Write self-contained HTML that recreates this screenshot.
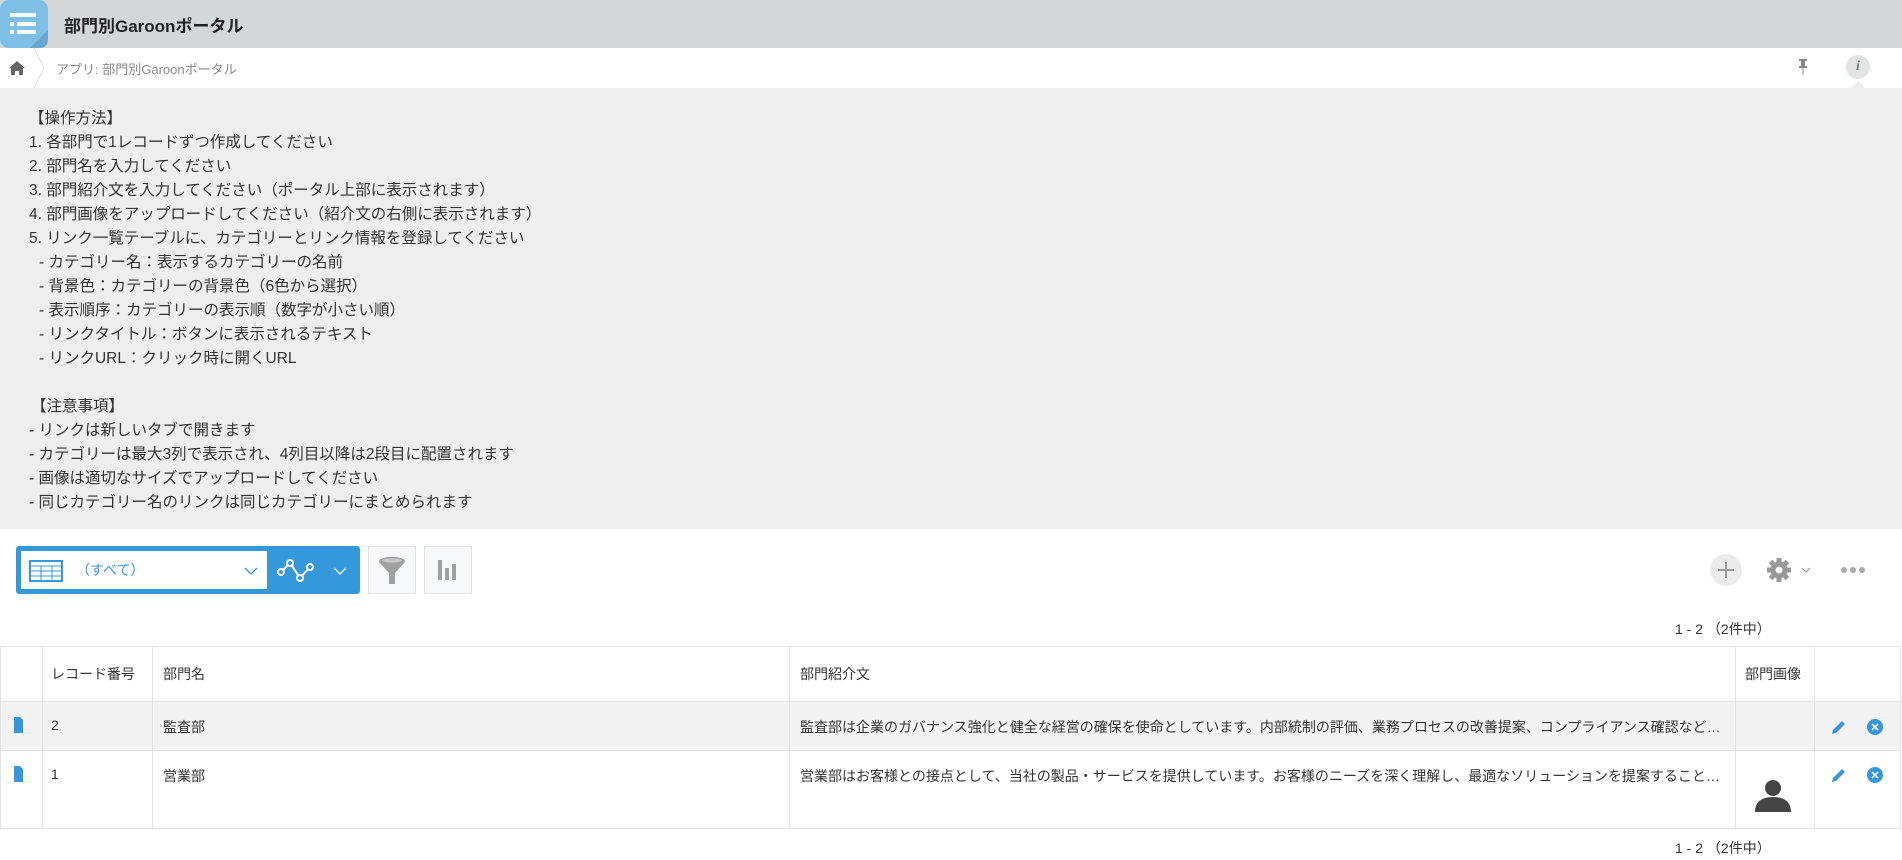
<!DOCTYPE html>
<html><head><meta charset="utf-8"><style>
*{margin:0;padding:0;box-sizing:border-box}
body{width:1902px;height:860px;overflow:hidden;background:#fff;font-family:"Liberation Sans","Noto Sans CJK JP",sans-serif;color:#333;position:relative}
.abs{position:absolute}
.hdr{left:0;top:0;width:1902px;height:48px;background:#d4d7d8}
.title{left:64px;top:12px;font-size:17px;font-weight:bold;color:#222}
.crumb{left:0;top:48px;width:1902px;height:40px;background:#fff}
.desc{left:0;top:88px;width:1902px;height:441px;background:#eee}
.ln{position:absolute;font-size:15.5px;color:#333;white-space:nowrap;line-height:24px;margin-top:2px;margin-left:-1px}
table{position:absolute;left:0;top:646px;border-collapse:collapse;font-size:14px;table-layout:fixed}
td{border:1px solid #e3e3e3;padding:0 10px;vertical-align:top;white-space:nowrap;overflow:hidden}
.cnt{font-size:14px;color:#333}
</style></head><body>
<div class="abs hdr"></div>
<svg class="abs" style="left:0;top:0" width="48" height="48"><rect width="48" height="48" rx="9" fill="#7ebfe6"/><path d="M30 48 L48 30 L48 39 Q48 48 39 48Z" fill="#6aa7d0"/><rect x="10" y="13" width="26" height="4" fill="#fff"/><rect x="10" y="22" width="4" height="4" fill="#fff"/><rect x="17" y="22" width="19" height="4" fill="#fff"/><rect x="10" y="30" width="4" height="4" fill="#fff"/><rect x="17" y="30" width="19" height="4" fill="#fff"/></svg>
<div class="abs title">部門別Garoonポータル</div>
<div class="abs crumb"></div>
<svg class="abs" style="left:8px;top:60px" width="18" height="16"><path d="M9 1 L1 8 H3 V15 H7 V11 H11 V15 H15 V8 H17Z" fill="#666"/></svg>
<svg class="abs" style="left:32px;top:48px" width="14" height="40"><path d="M2 0 L12 20 L2 40" fill="none" stroke="#ddd"/></svg>
<div class="abs" style="left:56px;top:59px;font-size:13px;color:#888">アプリ: 部門別Garoonポータル</div>
<svg class="abs" style="left:1796px;top:57px" width="14" height="20"><path d="M3 2 H11 V4 H9 V9 H11 V11 H3 V9 H5 V4 H3Z M6.5 11 V18 H7.5 V11" fill="#888"/></svg>
<div class="abs" style="left:1846px;top:55px;width:24px;height:24px;border-radius:12px;background:#e3e4e5;text-align:center;font:italic bold 14px 'Liberation Serif',serif;line-height:24px;color:#777">i</div>
<div class="abs desc"></div>
<svg class="abs" style="left:1850px;top:81px" width="16" height="8"><path d="M0 8 L8 0 L16 8Z" fill="#eee"/></svg>
<div class="ln" style="left:30px;top:105px">【操作方法】</div>
<div class="ln" style="left:30px;top:129px">1. 各部門で1レコードずつ作成してください</div>
<div class="ln" style="left:30px;top:153px">2. 部門名を入力してください</div>
<div class="ln" style="left:30px;top:177px">3. 部門紹介文を入力してください（ポータル上部に表示されます）</div>
<div class="ln" style="left:30px;top:201px">4. 部門画像をアップロードしてください（紹介文の右側に表示されます）</div>
<div class="ln" style="left:30px;top:225px">5. リンク一覧テーブルに、カテゴリーとリンク情報を登録してください</div>
<div class="ln" style="left:40px;top:249px">- カテゴリー名：表示するカテゴリーの名前</div>
<div class="ln" style="left:40px;top:273px">- 背景色：カテゴリーの背景色（6色から選択）</div>
<div class="ln" style="left:40px;top:297px">- 表示順序：カテゴリーの表示順（数字が小さい順）</div>
<div class="ln" style="left:40px;top:321px">- リンクタイトル：ボタンに表示されるテキスト</div>
<div class="ln" style="left:40px;top:345px">- リンクURL：クリック時に開くURL</div>
<div class="ln" style="left:32px;top:393px">【注意事項】</div>
<div class="ln" style="left:30px;top:417px">- リンクは新しいタブで開きます</div>
<div class="ln" style="left:30px;top:441px">- カテゴリーは最大3列で表示され、4列目以降は2段目に配置されます</div>
<div class="ln" style="left:30px;top:465px">- 画像は適切なサイズでアップロードしてください</div>
<div class="ln" style="left:30px;top:489px">- 同じカテゴリー名のリンクは同じカテゴリーにまとめられます</div>

<div class="abs" style="left:16px;top:546px;width:344px;height:48px;background:#3498db;border-radius:3px"></div>
<div class="abs" style="left:21px;top:551px;width:246px;height:38px;background:#fff"></div>
<svg class="abs" style="left:29px;top:560px" width="34" height="22"><rect x="1" y="1" width="32" height="20" fill="#fff" stroke="#3498db" stroke-width="2"/><path d="M1 6H33M1 11H33M1 16H33M12 6V21M23 6V21" stroke="#3498db" stroke-width="1"/></svg>
<div class="abs" style="left:76px;top:560px;font-size:14px;color:#3498db">（すべて）</div>
<svg class="abs" style="left:244px;top:566px" width="14" height="10"><path d="M1 2 L7 8 L13 2" fill="none" stroke="#3498db" stroke-width="1.3"/></svg>
<svg class="abs" style="left:276px;top:558px" width="42" height="26"><path d="M5 14 L14 5 L24 20 L34 9" fill="none" stroke="#fff" stroke-width="2"/><g fill="#3498db" stroke="#fff" stroke-width="2"><circle cx="5" cy="14" r="3"/><circle cx="14" cy="5" r="3"/><circle cx="24" cy="20" r="3"/><circle cx="34" cy="9" r="3"/></g></svg>
<svg class="abs" style="left:333px;top:566px" width="14" height="10"><path d="M1 2 L7 8 L13 2" fill="none" stroke="#fff" stroke-width="1.3"/></svg>
<div class="abs" style="left:368px;top:546px;width:48px;height:48px;background:#f7f8f9;border:1px solid #e3e3e3"></div>
<svg class="abs" style="left:377px;top:555px" width="30" height="30"><ellipse cx="15" cy="6" rx="13" ry="4" fill="#a0a0a0"/><path d="M2 7 L12 18 V29 H18 V18 L28 7Z" fill="#a0a0a0"/><ellipse cx="15" cy="5.5" rx="10" ry="2" fill="#c8c8c8"/></svg>
<div class="abs" style="left:424px;top:546px;width:48px;height:48px;background:#f7f8f9;border:1px solid #e3e3e3"></div>
<svg class="abs" style="left:436px;top:558px" width="24" height="24"><rect x="2" y="2" width="4" height="20" fill="#a0a0a0"/><rect x="9" y="10" width="4" height="12" fill="#a0a0a0"/><rect x="16" y="6" width="4" height="16" fill="#a0a0a0"/></svg>
<svg class="abs" style="left:1710px;top:554px" width="32" height="32"><circle cx="16" cy="16" r="16" fill="#ebebeb"/><path d="M16 8V24M8 16H24" stroke="#999" stroke-width="2"/></svg>
<svg class="abs" style="left:1766px;top:557px" width="26" height="26" viewBox="0 0 26 26"><g fill="#999"><circle cx="13" cy="13" r="8.5"/><rect x="10.5" y="1" width="5" height="24"/><rect x="1" y="10.5" width="24" height="5"/><rect x="10.5" y="1" width="5" height="24" transform="rotate(45 13 13)"/><rect x="10.5" y="1" width="5" height="24" transform="rotate(-45 13 13)"/></g><circle cx="13" cy="13" r="3.5" fill="#fff"/></svg>
<svg class="abs" style="left:1801px;top:566px" width="10" height="8"><path d="M1 2 L5 6 L9 2" fill="none" stroke="#999" stroke-width="1.2"/></svg>
<svg class="abs" style="left:1840px;top:565px" width="26" height="10"><g fill="#aaa"><circle cx="4" cy="5" r="3"/><circle cx="13" cy="5" r="3"/><circle cx="22" cy="5" r="3"/></g></svg>
<div class="abs cnt" style="left:1675px;top:619px">1 - 2 （2件中）</div>

<table>
<colgroup><col style="width:42px"><col style="width:110px"><col style="width:637px"><col style="width:946px"><col style="width:79px"><col style="width:86px"></colgroup>
<tr style="height:55px"><td></td><td style="padding:17px 0 0 8px">レコード番号</td><td style="padding-top:17px">部門名</td><td style="padding-top:17px">部門紹介文</td><td style="padding-top:17px;padding-left:9px">部門画像</td><td></td></tr>
<tr style="height:49px;background:#f3f3f3"><td style="padding:15px 0 0 13px"><svg width="9" height="16"><path d="M0 0H6L9 3V16H0Z" fill="#3498db"/></svg></td><td style="padding:15px 0 0 8px">2</td><td style="padding-top:15px">監査部</td><td style="padding-top:15px;text-overflow:ellipsis">監査部は企業のガバナンス強化と健全な経営の確保を使命としています。内部統制の評価、業務プロセスの改善提案、コンプライアンス確認など…</td><td></td><td style="padding:16px 0 0 15px"><svg width="60" height="18"><path d="M2 16 L3 12 L12 3 L15 6 L6 15Z" fill="#3498db"/><circle cx="45" cy="9" r="8" fill="#3498db"/><path d="M42 6 L48 12 M48 6 L42 12" stroke="#fff" stroke-width="1.5"/></svg></td></tr>
<tr style="height:78px"><td style="padding:15px 0 0 13px"><svg width="9" height="16"><path d="M0 0H6L9 3V16H0Z" fill="#3498db"/></svg></td><td style="padding:15px 0 0 8px">1</td><td style="padding-top:15px">営業部</td><td style="padding-top:15px">営業部はお客様との接点として、当社の製品・サービスを提供しています。お客様のニーズを深く理解し、最適なソリューションを提案すること…</td><td style="padding:29px 0 0 19px"><svg width="36" height="32"><circle cx="18" cy="8" r="8" fill="#444"/><path d="M0 32 Q0 17 18 17 Q36 17 36 32Z" fill="#444"/></svg></td><td style="padding:15px 0 0 15px"><svg width="60" height="18"><path d="M2 16 L3 12 L12 3 L15 6 L6 15Z" fill="#3498db"/><circle cx="45" cy="9" r="8" fill="#3498db"/><path d="M42 6 L48 12 M48 6 L42 12" stroke="#fff" stroke-width="1.5"/></svg></td></tr>
</table>
<div class="abs cnt" style="left:1675px;top:838px">1 - 2 （2件中）</div>
</body></html>
